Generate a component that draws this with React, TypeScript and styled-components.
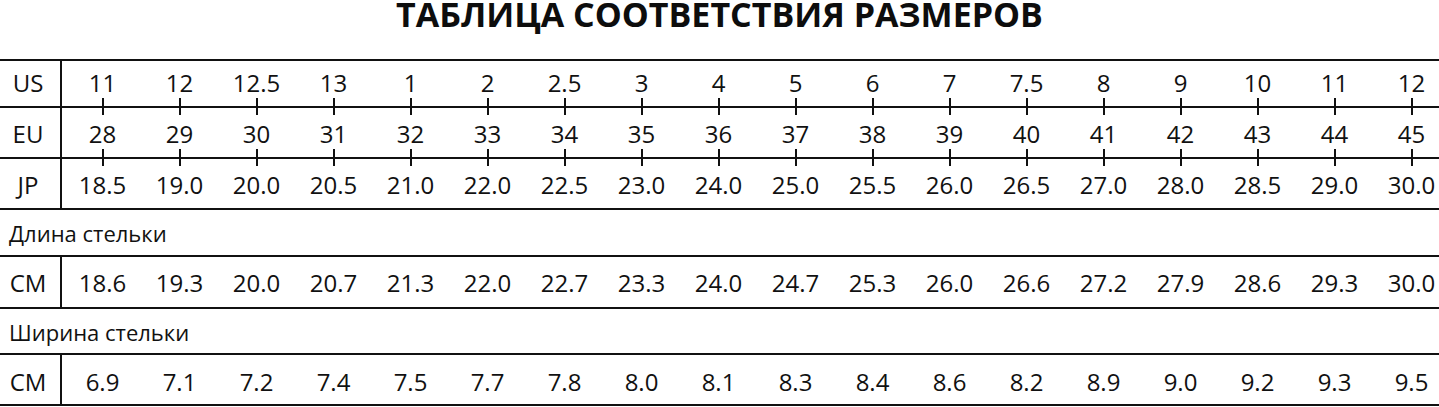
import styled, { createGlobalStyle } from "styled-components";

const GlobalStyle = createGlobalStyle`
  html, body {
    margin: 0;
    padding: 0;
    background: #fff;
  }
  body {
    font-family: "Open Sans", "Noto Sans", sans-serif;
    color: #111;
    overflow: hidden;
  }
`;

const Page = styled.div`
  width: 1439px;
  height: 407px;
  overflow: hidden;
`;

const Header = styled.div`
  height: 59px;
`;

const Title = styled.h1`
  margin: 0;
  font-size: 34px;
  font-weight: 700;
  line-height: 28px;
  text-align: center;
  color: #0d0d0d;
`;

const Table = styled.div`
  border-top: 2px solid #111;
  width: 1450px;
`;

const Row = styled.div<{ $h: number }>`
  display: flex;
  height: ${(p) => p.$h}px;
  box-sizing: border-box;
  border-bottom: 2px solid #111;
`;

const Label = styled.div<{ $pt: number }>`
  width: 62px;
  flex: none;
  box-sizing: border-box;
  border-right: 2px solid #111;
  padding: ${(p) => p.$pt}px 4px 0 0;
  text-align: center;
  font-size: 24px;
  line-height: 24px;
`;

const Values = styled.div`
  display: grid;
  grid-template-columns: repeat(18, 77px);
  margin-left: 2px;
`;

const Cell = styled.div<{ $pt: number; $tick?: boolean }>`
  position: relative;
  padding-top: ${(p) => p.$pt}px;
  text-align: center;
  font-size: 24px;
  line-height: 24px;

  ${(p) =>
    p.$tick &&
    `
    &::before {
      content: "";
      position: absolute;
      left: calc(50% - 1px);
      top: -10px;
      width: 2px;
      height: 17px;
      background: #111;
    }
  `}
`;

const Caption = styled.div<{ $h: number; $pt: number }>`
  height: ${(p) => p.$h}px;
  box-sizing: border-box;
  border-bottom: 2px solid #111;
  padding: ${(p) => p.$pt}px 0 0 9px;
  font-size: 22px;
  line-height: 22px;
`;

type DataRow = {
  kind: "data";
  label: string;
  values: string[];
  h: number;
  pt: number;
  tick?: boolean;
};

type CaptionRow = { kind: "caption"; text: string; h: number; pt: number };

const rows: (DataRow | CaptionRow)[] = [
  {
    kind: "data",
    label: "US",
    h: 47,
    pt: 10,
    values: ["11", "12", "12.5", "13", "1", "2", "2.5", "3", "4", "5", "6", "7", "7.5", "8", "9", "10", "11", "12"],
  },
  {
    kind: "data",
    label: "EU",
    h: 51,
    pt: 14,
    tick: true,
    values: ["28", "29", "30", "31", "32", "33", "34", "35", "36", "37", "38", "39", "40", "41", "42", "43", "44", "45"],
  },
  {
    kind: "data",
    label: "JP",
    h: 51,
    pt: 14,
    tick: true,
    values: ["18.5", "19.0", "20.0", "20.5", "21.0", "22.0", "22.5", "23.0", "24.0", "25.0", "25.5", "26.0", "26.5", "27.0", "28.0", "28.5", "29.0", "30.0"],
  },
  { kind: "caption", text: "Длина стельки", h: 47, pt: 12 },
  {
    kind: "data",
    label: "CM",
    h: 52,
    pt: 14,
    values: ["18.6", "19.3", "20.0", "20.7", "21.3", "22.0", "22.7", "23.3", "24.0", "24.7", "25.3", "26.0", "26.6", "27.2", "27.9", "28.6", "29.3", "30.0"],
  },
  { kind: "caption", text: "Ширина стельки", h: 46, pt: 12 },
  {
    kind: "data",
    label: "CM",
    h: 51,
    pt: 15,
    values: ["6.9", "7.1", "7.2", "7.4", "7.5", "7.7", "7.8", "8.0", "8.1", "8.3", "8.4", "8.6", "8.2", "8.9", "9.0", "9.2", "9.3", "9.5"],
  },
];

const App = () => {
  return (
    <Page>
      <GlobalStyle />
      <Header>
        <Title>ТАБЛИЦА СООТВЕТСТВИЯ РАЗМЕРОВ</Title>
      </Header>
      <Table>
        {rows.map((row, i) =>
          row.kind === "caption" ? (
            <Caption key={i} $h={row.h} $pt={row.pt}>
              {row.text}
            </Caption>
          ) : (
            <Row key={i} $h={row.h}>
              <Label $pt={row.pt}>{row.label}</Label>
              <Values>
                {row.values.map((v, j) => (
                  <Cell key={j} $pt={row.pt} $tick={row.tick}>
                    {v}
                  </Cell>
                ))}
              </Values>
            </Row>
          )
        )}
      </Table>
    </Page>
  );
};

export default App;
